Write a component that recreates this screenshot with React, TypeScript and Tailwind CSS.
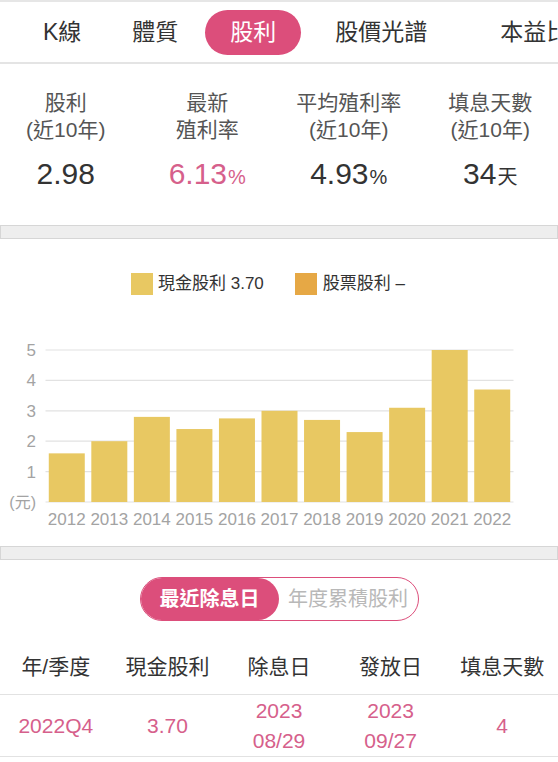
const FONT = "font-['Liberation_Sans','Noto_Sans_CJK_TC',sans-serif]"

const tabs = [
  { label: 'K線', ml: 'ml-[43px]' },
  { label: '體質', ml: 'ml-[51px]' },
  { label: '股利', ml: 'ml-[27px]', active: true },
  { label: '股價光譜', ml: 'ml-[34px]' },
  { label: '本益比', ml: 'ml-[73px]' },
]

const years = [
  { y: '2012', v: 1.6 },
  { y: '2013', v: 2.0 },
  { y: '2014', v: 2.8 },
  { y: '2015', v: 2.4 },
  { y: '2016', v: 2.75 },
  { y: '2017', v: 3.0 },
  { y: '2018', v: 2.7 },
  { y: '2019', v: 2.3 },
  { y: '2020', v: 3.1 },
  { y: '2021', v: 5.0 },
  { y: '2022', v: 3.7 },
]

// chart geometry (svg coords)
const X0 = 45.5
const X1 = 513.5
const BASE = 167
const UNIT = 30.4
const STEP = (X1 - X0) / years.length

function TabBar() {
  return (
    <div className="flex h-[62px] items-center whitespace-nowrap border-b-2 border-[#e4e4e4] text-[23px] text-[#333]">
      {tabs.map((t) =>
        t.active ? (
          <div key={t.label} className={`${t.ml} flex h-[45px] shrink-0 items-center rounded-full bg-[#dc4e7b] px-[25px] text-white`}>
            {t.label}
          </div>
        ) : (
          <div key={t.label} className={`${t.ml} shrink-0`}>
            {t.label}
          </div>
        )
      )}
    </div>
  )
}

function Stat({ l1, l2, value, unit, pink }: { l1: string; l2: string; value: string; unit?: string; pink?: boolean }) {
  return (
    <div className="flex flex-col items-center">
      <div className="text-[21px] leading-[27px] text-[#555]">{l1}</div>
      <div className="text-[21px] leading-[27px] text-[#555]">{l2}</div>
      <div className={`mt-[13px] text-[30px] leading-[36px] ${pink ? 'text-[#d6608b]' : 'text-[#333]'}`}>
        {value}
        {unit && <span className="ml-[1px] text-[20px]">{unit}</span>}
      </div>
    </div>
  )
}

function Band() {
  return <div className="h-[14px] border border-[#d6d6d6] bg-[#eeeeee]" />
}

function Chart() {
  return (
    <svg width="558" height="200" className="block">
      {[0, 1, 2, 3, 4, 5].map((v) => (
        <line key={v} x1={X0} x2={X1} y1={BASE - v * UNIT} y2={BASE - v * UNIT} stroke="#e2e2e2" strokeWidth="1.2" />
      ))}
      {[1, 2, 3, 4, 5].map((v) => (
        <text key={v} x="36" y={BASE - v * UNIT + 6} textAnchor="end" fontSize="17" fill="#a3a3a3">
          {v}
        </text>
      ))}
      <text x="36" y={BASE + 6} textAnchor="end" fontSize="16" fill="#a3a3a3">
        (元)
      </text>
      {years.map((d, i) => {
        const cx = X0 + STEP * (i + 0.5)
        return (
          <g key={d.y}>
            <rect x={cx - 18} y={BASE - d.v * UNIT} width="36" height={d.v * UNIT} fill="#e8c862" />
            <text x={cx} y={BASE + 23} textAnchor="middle" fontSize="17" fill="#a3a3a3">
              {d.y}
            </text>
          </g>
        )
      })}
    </svg>
  )
}

export default function App() {
  return (
    <div className={`h-[762px] w-[558px] overflow-hidden bg-white ${FONT}`}>
      <div className="border-t-2 border-[#e6e6e6]" />
      <TabBar />

      {/* summary */}
      <div className="h-[161px] overflow-hidden pt-[25px]">
        <div className="-ml-[5px] grid w-[566px] grid-cols-4">
          <Stat l1="股利" l2="(近10年)" value="2.98" />
          <Stat l1="最新" l2="殖利率" value="6.13" unit="%" pink />
          <Stat l1="平均殖利率" l2="(近10年)" value="4.93" unit="%" />
          <Stat l1="填息天數" l2="(近10年)" value="34" unit="天" />
        </div>
      </div>

      <Band />

      {/* chart */}
      <div className="h-[307px]">
        <div className="flex items-center pl-[131px] pt-[32px] text-[17px] text-[#333]">
          <div className="h-[22px] w-[22px] bg-[#e8c862]" />
          <span className="ml-[5px]">現金股利 3.70</span>
          <div className="ml-[31px] h-[22px] w-[22px] bg-[#e6a845]" />
          <span className="ml-[6px]">股票股利 –</span>
        </div>
        <div className="mt-[38px]">
          <Chart />
        </div>
      </div>

      <Band />

      {/* ex-dividend */}
      <div className="flex justify-center pt-[17px]">
        <div className="flex h-[44px] w-[279px] items-center rounded-full border-[1.5px] border-[#dc4e7b] text-[20px]">
          <div className="flex h-full w-[138px] items-center justify-center rounded-full bg-[#dc4e7b] font-semibold text-white">
            最近除息日
          </div>
          <div className="flex-1 text-center text-[#b8b8b8]">年度累積股利</div>
        </div>
      </div>

      <div className="mt-[32px] grid grid-cols-5 border-b border-[#e2e2e2] pb-[13px] text-center text-[21px] leading-[28px] text-[#333]">
        <div>年/季度</div>
        <div>現金股利</div>
        <div>除息日</div>
        <div>發放日</div>
        <div>填息天數</div>
      </div>

      <div className="grid h-[62px] grid-cols-5 items-center border-b border-[#e2e2e2] text-center text-[21px] leading-[30px] text-[#d6608b]">
        <div>2022Q4</div>
        <div>3.70</div>
        <div>
          2023
          <br />
          08/29
        </div>
        <div>
          2023
          <br />
          09/27
        </div>
        <div>4</div>
      </div>
    </div>
  )
}
